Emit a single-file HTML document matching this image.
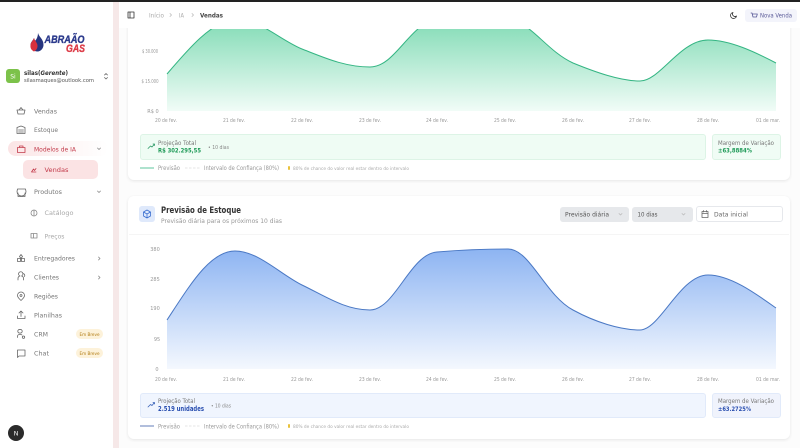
<!DOCTYPE html>
<html lang="pt-BR"><head><meta charset="utf-8"><title>Vendas</title>
<style>
html,body{margin:0;padding:0;width:800px;height:448px;overflow:hidden;background:#fff;font-family:"Liberation Sans",sans-serif}
.b{position:absolute;box-sizing:border-box}
svg{position:absolute;left:0;top:0}
svg text{font-family:"DejaVu Sans","Liberation Sans",sans-serif}
.i{fill:none;stroke:#666;stroke-width:.8;stroke-linecap:round;stroke-linejoin:round}
</style></head><body>
<div class="b" style="left:113px;top:0;width:687px;height:448px;background:#fcfcfc"></div>
<div class="b" style="left:113px;top:0;width:6px;height:448px;background:#f6e8e8"></div>
<div class="b" style="left:128px;top:20px;width:662px;height:160px;background:#fff;border-radius:6px;box-shadow:0 1px 3px rgba(0,0,0,.09)"></div>
<div class="b" style="left:128px;top:196px;width:662px;height:243px;background:#fff;border-radius:6px;box-shadow:0 1px 3px rgba(0,0,0,.09)"></div>
<div class="b" style="left:119px;top:0;width:681px;height:28px;background:#fff"></div>
<div class="b" style="left:0;top:0;width:800px;height:1.5px;background:#222"></div>
<div class="b" style="left:8px;top:141px;width:100px;height:15px;background:linear-gradient(90deg,#fbe4e5,#fdf6f6 60%,#fff);border-radius:8px"></div>
<div class="b" style="left:23px;top:160px;width:75px;height:19px;background:#fbe3e4;border-radius:5px"></div>
<div class="b" style="left:6px;top:69px;width:14px;height:14px;background:#7cc24a;border-radius:3px"></div>
<div class="b" style="left:76px;top:329px;width:27px;height:10px;background:#fdf2da;border-radius:5px"></div>
<div class="b" style="left:76px;top:348px;width:27px;height:10px;background:#fdf2da;border-radius:5px"></div>
<div class="b" style="left:745px;top:9px;width:52px;height:13px;background:#f3f4fb;border-radius:3px"></div>
<div class="b" style="left:140px;top:134px;width:566px;height:26px;background:#effcf4;border:.5px solid #ddf4e6;border-radius:3px"></div>
<div class="b" style="left:712px;top:134px;width:69px;height:26px;background:#f0fcf5;border:.5px solid #ddf4e6;border-radius:3px"></div>
<div class="b" style="left:140px;top:393px;width:566px;height:25px;background:#f0f5fe;border:.5px solid #e1eafa;border-radius:3px"></div>
<div class="b" style="left:712px;top:393px;width:69px;height:25px;background:#f0f3fc;border:.5px solid #e1eafa;border-radius:3px"></div>
<div class="b" style="left:139px;top:206px;width:16px;height:16px;background:#dfe9fb;border-radius:3px"></div>
<div class="b" style="left:560px;top:207px;width:69px;height:15px;background:#e6e8eb;border-radius:3px"></div>
<div class="b" style="left:632px;top:207px;width:61px;height:15px;background:#e6e8eb;border-radius:3px"></div>
<div class="b" style="left:696px;top:206px;width:87px;height:16px;background:#fff;border:.6px solid #e6e8ec;border-radius:3px"></div>
<div class="b" style="left:129px;top:234px;width:660px;height:1px;background:#f5f5f5"></div>
<div class="b" style="left:8px;top:425px;width:16px;height:16px;background:#2b2b2b;border-radius:50%"></div>

<svg width="800" height="448" viewBox="0 0 800 448">
<defs>
<linearGradient id="g" x1="0" y1="0" x2="0" y2="1"><stop offset="0" stop-color="#7edab3"/><stop offset="1" stop-color="#f1fcf7"/></linearGradient>
<linearGradient id="u" x1="0" y1="0" x2="0" y2="1"><stop offset="0" stop-color="#8db4f2"/><stop offset="1" stop-color="#f4f8fe"/></linearGradient>
<clipPath id="c"><rect x="150" y="29" width="640" height="90"/></clipPath>
</defs>

<!-- green chart -->
<g clip-path="url(#c)">
<path fill="url(#g)" d="M167 74C190 47 210 24 234 18C258 18 280 40 302 49C325 58 345 67 370 67C395 67 408 26 437 18C460 16 490 16 505 18C530 20 545 50 573 63C595 72 620 81 640 81C660 81 680 40 708 40C730 40 755 52 776 63V111H167Z"/>
<path fill="none" stroke="#34b583" stroke-width="1" d="M167 74C190 47 210 24 234 18C258 18 280 40 302 49C325 58 345 67 370 67C395 67 408 26 437 18C460 16 490 16 505 18C530 20 545 50 573 63C595 72 620 81 640 81C660 81 680 40 708 40C730 40 755 52 776 63"/>
</g>
<!-- blue chart -->
<path fill="url(#u)" d="M167 320C190 285 210 251 235 251C258 251 280 274 302 285C325 296 345 310 370 310C395 310 410 254 437 252C460 250 490 249 508 249C530 249 545 295 573 310C595 322 620 330 640 330C660 330 680 275 708 275C730 275 755 293 776 308V369H167Z"/>
<path fill="none" stroke="#4a78c4" stroke-width="1" d="M167 320C190 285 210 251 235 251C258 251 280 274 302 285C325 296 345 310 370 310C395 310 410 254 437 252C460 250 490 249 508 249C530 249 545 295 573 310C595 322 620 330 640 330C660 330 680 275 708 275C730 275 755 293 776 308"/>

<!-- axes text -->
<g font-size="5" fill="#999" text-anchor="middle">
<text x="150" y="53" textLength="16" lengthAdjust="spacingAndGlyphs">$ 30.000</text>
<text x="150" y="83" textLength="17" lengthAdjust="spacingAndGlyphs">$ 15.000</text>
<text x="153" y="113">R$ 0</text>
<text x="155" y="251">380</text><text x="155" y="281">285</text><text x="155" y="310">190</text><text x="157" y="341">95</text><text x="157" y="371">0</text>
</g>
<g font-size="5" fill="#999" text-anchor="middle">
<text x="166" y="122" textLength="22" lengthAdjust="spacingAndGlyphs">20 de fev.</text>
<text x="234" y="122" textLength="22" lengthAdjust="spacingAndGlyphs">21 de fev.</text>
<text x="302" y="122" textLength="22" lengthAdjust="spacingAndGlyphs">22 de fev.</text>
<text x="370" y="122" textLength="22" lengthAdjust="spacingAndGlyphs">23 de fev.</text>
<text x="437" y="122" textLength="22" lengthAdjust="spacingAndGlyphs">24 de fev.</text>
<text x="505" y="122" textLength="22" lengthAdjust="spacingAndGlyphs">25 de fev.</text>
<text x="573" y="122" textLength="22" lengthAdjust="spacingAndGlyphs">26 de fev.</text>
<text x="640" y="122" textLength="22" lengthAdjust="spacingAndGlyphs">27 de fev.</text>
<text x="708" y="122" textLength="22" lengthAdjust="spacingAndGlyphs">28 de fev.</text>
<text x="768" y="122" textLength="24" lengthAdjust="spacingAndGlyphs">01 de mar.</text>
<text x="166" y="381" textLength="22" lengthAdjust="spacingAndGlyphs">20 de fev.</text>
<text x="234" y="381" textLength="22" lengthAdjust="spacingAndGlyphs">21 de fev.</text>
<text x="302" y="381" textLength="22" lengthAdjust="spacingAndGlyphs">22 de fev.</text>
<text x="370" y="381" textLength="22" lengthAdjust="spacingAndGlyphs">23 de fev.</text>
<text x="437" y="381" textLength="22" lengthAdjust="spacingAndGlyphs">24 de fev.</text>
<text x="505" y="381" textLength="22" lengthAdjust="spacingAndGlyphs">25 de fev.</text>
<text x="573" y="381" textLength="22" lengthAdjust="spacingAndGlyphs">26 de fev.</text>
<text x="640" y="381" textLength="22" lengthAdjust="spacingAndGlyphs">27 de fev.</text>
<text x="708" y="381" textLength="22" lengthAdjust="spacingAndGlyphs">28 de fev.</text>
<text x="768" y="381" textLength="24" lengthAdjust="spacingAndGlyphs">01 de mar.</text>
</g>

<!-- summaries -->
<path class="i" style="stroke:#2f9a68" d="M148 148.500l2.500-2.500 1.500 1 2.500-3m-1.500 0h1.500v1.500"/>
<text x="158" y="145" font-size="6" fill="#777" textLength="38" lengthAdjust="spacingAndGlyphs">Projeção Total</text>
<text x="158" y="152.500" font-size="6.500" font-weight="700" fill="#1f9a58" textLength="43" lengthAdjust="spacingAndGlyphs">R$ 302.295,55</text>
<text x="208" y="149" font-size="5.500" fill="#888" textLength="21" lengthAdjust="spacingAndGlyphs">• 10 dias</text>
<text x="718" y="145" font-size="6" fill="#777" textLength="56" lengthAdjust="spacingAndGlyphs">Margem de Variação</text>
<text x="718" y="152.500" font-size="6.500" font-weight="700" fill="#1f9a58" textLength="34" lengthAdjust="spacingAndGlyphs">±63,8884%</text>

<path class="i" style="stroke:#3a63b8" d="M148 407l2.500-2.500 1.500 1 2.500-3m-1.500 0h1.500v1.500"/>
<text x="158" y="403" font-size="6" fill="#777" textLength="37" lengthAdjust="spacingAndGlyphs">Projeção Total</text>
<text x="158" y="411" font-size="7" font-weight="700" fill="#2a4fb0" textLength="46" lengthAdjust="spacingAndGlyphs">2.519 unidades</text>
<text x="211" y="407.500" font-size="5.500" fill="#888" textLength="20" lengthAdjust="spacingAndGlyphs">• 10 dias</text>
<text x="718" y="403" font-size="6" fill="#777" textLength="56" lengthAdjust="spacingAndGlyphs">Margem de Variação</text>
<text x="718" y="411" font-size="6.500" font-weight="700" fill="#2a4fb0" textLength="33" lengthAdjust="spacingAndGlyphs">±63.2725%</text>

<!-- legends -->
<line x1="140" y1="168" x2="154" y2="168" stroke="#34b583" stroke-width=".8"/>
<line x1="185" y1="168" x2="200" y2="168" stroke="#ccc" stroke-width=".6" stroke-dasharray="2.500 1.500"/>
<text x="158" y="170" font-size="6" fill="#999" textLength="22" lengthAdjust="spacingAndGlyphs">Previsão</text>
<text x="204" y="170" font-size="6" fill="#999" textLength="75" lengthAdjust="spacingAndGlyphs">Intervalo de Confiança (80%)</text>
<rect x="288" y="166" width="2" height="4" rx="1" fill="#e9c23c"/>
<text x="293" y="170" font-size="4.500" fill="#aaa" textLength="116" lengthAdjust="spacingAndGlyphs">80% de chance do valor real estar dentro do intervalo</text>

<line x1="140" y1="426" x2="154" y2="426" stroke="#3c5da8" stroke-width=".8"/>
<line x1="185" y1="426" x2="200" y2="426" stroke="#ccc" stroke-width=".6" stroke-dasharray="2.500 1.500"/>
<text x="158" y="428.500" font-size="6" fill="#999" textLength="22" lengthAdjust="spacingAndGlyphs">Previsão</text>
<text x="204" y="428.500" font-size="6" fill="#999" textLength="75" lengthAdjust="spacingAndGlyphs">Intervalo de Confiança (80%)</text>
<rect x="288" y="424" width="2" height="4" rx="1" fill="#e9c23c"/>
<text x="293" y="428" font-size="4.500" fill="#aaa" textLength="116" lengthAdjust="spacingAndGlyphs">80% de chance do valor real estar dentro do intervalo</text>

<!-- card 2 header -->
<path class="i" style="stroke:#3a6fd0" d="M147 210l3.500 2v4l-3.500 2-3.500-2v-4zM143.500 212l3.500 2 3.500-2M147 214v4"/>
<text x="161" y="213" font-size="8.500" font-weight="700" fill="#333" textLength="80" lengthAdjust="spacingAndGlyphs">Previsão de Estoque</text>
<text x="161" y="223" font-size="6.500" fill="#999" textLength="121" lengthAdjust="spacingAndGlyphs">Previsão diária para os próximos 10 dias</text>
<text x="565" y="216.500" font-size="6.500" fill="#555" textLength="44" lengthAdjust="spacingAndGlyphs">Previsão diária</text>
<path class="i" style="stroke:#bbb" d="M619 213.500l1.500 1.500 1.500-1.500M682 213.500l1.500 1.500 1.500-1.500"/>
<text x="637.500" y="216.500" font-size="6.500" fill="#555" textLength="20" lengthAdjust="spacingAndGlyphs">10 dias</text>
<path class="i" d="M702 211.500h6v6h-6zM702 213.500h6M703.500 210.500v1.500M706.500 210.500v1.500"/>
<text x="714" y="216.500" font-size="6.500" fill="#666" textLength="34" lengthAdjust="spacingAndGlyphs">Data inicial</text>

<!-- header -->
<path class="i" style="stroke:#333" d="M128 12h6v6h-6zM130 12v6"/>
<text x="149" y="17.500" font-size="6" fill="#aaa" textLength="15" lengthAdjust="spacingAndGlyphs">Início</text>
<path class="i" style="stroke:#bbb" d="M170 13.500l1.500 1.500-1.500 1.500M192 13.500l1.500 1.500-1.500 1.500"/>
<text x="179" y="17.500" font-size="6" fill="#aaa" textLength="5" lengthAdjust="spacingAndGlyphs">IA</text>
<text x="200" y="17.500" font-size="6.500" font-weight="700" fill="#444" textLength="23" lengthAdjust="spacingAndGlyphs">Vendas</text>
<path class="i" style="stroke:#333" d="M733 12.500a3 3 0 1 0 3.500 3.500a2.500 2.500 0 0 1-3.500-3.500z"/>
<path class="i" style="stroke:#5a5a98" d="M751 13h1l1 4h3.500l.8-3h-5"/>
<text x="760" y="17.500" font-size="6" fill="#5a5a98" textLength="32" lengthAdjust="spacingAndGlyphs">Nova Venda</text>

<!-- logo -->
<path d="M38 33c1 4 5.500 6 5.500 12c0 3-2.500 6.500-6 6.500c-3.500 0-7-2.500-7-6.500c0-3 2.500-4.500 3.500-7c.5 2 1 2.500 1.500 2.500c1.500-2 2.500-4.500 2.500-7.500z" fill="#26357f"/>
<path d="M34 38c1 3 3.500 5 3.500 8c0 2.500-1.500 4.500-3.500 5.500c-2-1-4-3-3.500-6.500c.3-3 2.500-4 3.500-7z" fill="#d7313d"/>
<text x="44.500" y="43" font-size="11" font-weight="700" font-style="italic" fill="#2b3a8c" stroke="#2b3a8c" stroke-width=".35" textLength="40" lengthAdjust="spacingAndGlyphs" style="font-family:'Liberation Sans',sans-serif">ABRAÃO</text>
<text x="66" y="52" font-size="11" font-weight="700" font-style="italic" fill="#dc3a46" stroke="#dc3a46" stroke-width=".35" textLength="19" lengthAdjust="spacingAndGlyphs" style="font-family:'Liberation Sans',sans-serif">GAS</text>

<!-- user -->
<text x="13" y="78.500" font-size="6" fill="#fff" text-anchor="middle">Si</text>
<text x="24" y="75" font-size="6" font-weight="700" fill="#333" textLength="44" lengthAdjust="spacingAndGlyphs">silas(<tspan font-style="italic">Gerente</tspan>)</text>
<text x="24" y="82" font-size="5.500" fill="#555" textLength="70" lengthAdjust="spacingAndGlyphs">silasmaques@outlook.com</text>
<path class="i" d="M104.500 75l1.500-1.500 1.500 1.500M104.500 77.500l1.500 1.500 1.500-1.500"/>

<!-- nav -->
<g font-size="6.500" fill="#777">
<text x="34" y="113.500" textLength="23" lengthAdjust="spacingAndGlyphs">Vendas</text>
<text x="34" y="132" textLength="24" lengthAdjust="spacingAndGlyphs">Estoque</text>
<text x="34" y="151.500" fill="#c23a4a" textLength="42" lengthAdjust="spacingAndGlyphs">Modelos de IA</text>
<text x="44.500" y="172" fill="#c23a4a" textLength="24" lengthAdjust="spacingAndGlyphs">Vendas</text>
<text x="34" y="194" textLength="28" lengthAdjust="spacingAndGlyphs">Produtos</text>
<text x="44.500" y="215" fill="#aaa" textLength="29" lengthAdjust="spacingAndGlyphs">Catálogo</text>
<text x="44.500" y="238.500" fill="#aaa" textLength="20" lengthAdjust="spacingAndGlyphs">Preços</text>
<text x="34" y="260.500" textLength="41" lengthAdjust="spacingAndGlyphs">Entregadores</text>
<text x="34" y="279.500" textLength="25" lengthAdjust="spacingAndGlyphs">Clientes</text>
<text x="34" y="298.500" textLength="24" lengthAdjust="spacingAndGlyphs">Regiões</text>
<text x="34" y="317.500" textLength="28" lengthAdjust="spacingAndGlyphs">Planilhas</text>
<text x="34" y="336.500" textLength="14" lengthAdjust="spacingAndGlyphs">CRM</text>
<text x="34" y="355.500" textLength="15" lengthAdjust="spacingAndGlyphs">Chat</text>
</g>
<g font-size="4.500" fill="#b07a10">
<text x="79.500" y="336" textLength="20" lengthAdjust="spacingAndGlyphs">Em Breve</text>
<text x="79.500" y="355" textLength="20" lengthAdjust="spacingAndGlyphs">Em Breve</text>
</g>
<text x="16" y="435.500" font-size="6.500" fill="#eee" text-anchor="middle">N</text>

<!-- nav icons -->
<path class="i" d="M17 110h8l-1 4h-6zM19 110l2-2.500 2 2.500"/>
<path class="i" d="M17 127.500l4-1.500 4 1.500v6h-8zM18.500 130h5M18.500 132h5"/>
<path class="i" style="stroke:#c23a4a" d="M17.500 147.500h7.500v5h-7.500zM19.500 147.500v-1.500h3.500v1.500"/>
<path class="i" style="stroke:#c23a4a" d="M31.500 172l2-3 1 1.500 1.500-2M31.500 172h4.500"/>
<path class="i" d="M17.500 189h8l.5 2.500a1.500 1.500 0 0 1-9 0zM18 193v3.500h7V193"/>
<path class="i" style="stroke:#888" d="M31 213a3 3 0 1 0 6 0a3 3 0 1 0-6 0M34 210v6"/>
<path class="i" style="stroke:#888" d="M31 233.500h6v4.500h-6zM33.500 233.500v4.500"/>
<path class="i" d="M21 254.500l1.500 2-1.500 2-1.500-2zM17.500 258.500h3v3h-3zM21.500 258.500h3v3h-3z"/>
<path class="i" d="M18 280v-1.500a2.500 2.500 0 0 1 2-2.500a2.200 2.200 0 1 1 1.500 0a2.500 2.500 0 0 1 2 2.500v1.500M23 273.500a2 2 0 0 1 1.500 3"/>
<path class="i" d="M21 292a3.500 3.500 0 0 1 3.500 3.500c0 2-2 3.500-3.500 5c-1.500-1.500-3.500-3-3.500-5A3.500 3.500 0 0 1 21 292zM21 294.500a1 1 0 1 0 0 2a1 1 0 1 0 0-2"/>
<path class="i" d="M17.500 316v2.500h7.500V316M21 316.500v-5M19 313l2-2 2 2"/>
<path class="i" d="M17.500 337.500v-1a2 2 0 0 1 2-2h1.500a2 2 0 0 1 1 .5M20 333a1.800 1.800 0 1 0 0-3.500a1.800 1.800 0 1 0 0 3.500M23.500 336a1.200 1.200 0 1 0 0 2.400a1.200 1.200 0 1 0 0-2.400"/>
<path class="i" d="M17.500 350h7.500v6h-6l-1.500 1.500z"/>

<!-- chevrons -->
<path class="i" style="stroke:#888" d="M97.500 148l1.500 1.500 1.500-1.500M97.500 191l1.500 1.500 1.500-1.500M98.500 257l1.500 1.500-1.500 1.500M98.500 276l1.500 1.500-1.500 1.500"/>
</svg>
</body></html>
